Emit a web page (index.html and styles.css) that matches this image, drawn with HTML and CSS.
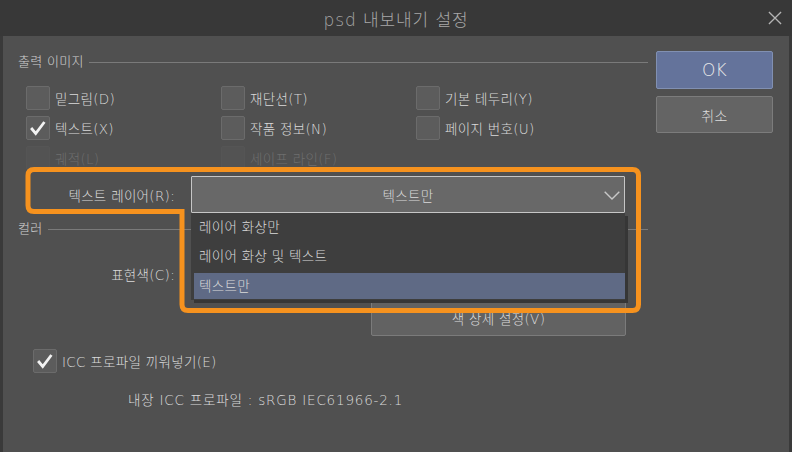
FILE: index.html
```html
<!DOCTYPE html>
<html lang="ko">
<head>
<meta charset="utf-8">
<title>psd 내보내기 설정</title>
<link rel="stylesheet" href="styles.css">
</head>
<body>
<div class="window">
  <header class="titlebar">
    <span class="title">psd 내보내기 설정</span>
    <svg class="close" viewBox="0 0 15 15"><path d="M1 1 L14 14 M14 1 L1 14"/></svg>
  </header>
  <div class="content">
    <div class="main">
      <div class="section-head"><span>출력 이미지</span><i class="rule"></i></div>
      <div class="checks">
        <label class="check"><span class="box"></span>밑그림(D)</label>
        <label class="check"><span class="box"></span>재단선(T)</label>
        <label class="check"><span class="box"></span>기본 테두리(Y)</label>
        <label class="check"><span class="box"><svg class="tick" viewBox="0 0 24 24"><polyline points="4.5,12 9.5,18 19,5.5"/></svg></span>텍스트(X)</label>
        <label class="check"><span class="box"></span>작품 정보(N)</label>
        <label class="check"><span class="box"></span>페이지 번호(U)</label>
        <label class="check disabled"><span class="box"></span>궤적(L)</label>
        <label class="check disabled"><span class="box"></span>세이프 라인(F)</label>
      </div>
      <div class="field">
        <span class="field-label">텍스트 레이어(R):</span>
        <div class="combo">
          <span>텍스트만</span>
          <svg class="chevron" viewBox="0 0 16 9"><polyline points="0.7,0.7 8,8 15.3,0.7"/></svg>
          <ul class="dropdown">
            <li class="item">레이어 화상만</li>
            <li class="item">레이어 화상 및 텍스트</li>
            <li class="item selected">텍스트만</li>
          </ul>
        </div>
      </div>
      <div class="section-head color-head"><span>컬러</span><i class="rule"></i></div>
      <div class="field field-color">
        <span class="field-label">표현색(C):</span>
        <div class="combo under"><span>RGB</span></div>
      </div>
      <button class="btn detail">색 상세 설정(V)</button>
      <label class="check icc"><span class="box"><svg class="tick" viewBox="0 0 24 24"><polyline points="4.5,12 9.5,18 19,5.5"/></svg></span>ICC 프로파일 끼워넣기(E)</label>
      <p class="embedded">내장 ICC 프로파일 : sRGB IEC61966-2.1</p>
    </div>
    <div class="side">
      <button class="btn ok">OK</button>
      <button class="btn cancel">취소</button>
    </div>
  </div>
  <svg class="highlight" viewBox="0 0 792 452"><path d="M34 169.5 H632.5 Q638.5 169.5 638.5 175.5 V304.5 Q638.5 310.5 632.5 310.5 H188 Q182 310.5 182 304.5 V211.5 H34 Q28 211.5 28 205.5 V175.5 Q28 169.5 34 169.5 Z"/></svg>
</div>
</body>
</html>
```

FILE: styles.css
```css
* { box-sizing: border-box; margin: 0; padding: 0; }

body {
  margin: 0;
  background: #3a3a3a;
  font-family: "DejaVu Sans", "Noto Sans CJK KR", sans-serif;
  font-size: 13.5px;
  font-weight: 300;
  letter-spacing: 0.3px;
  color: #dadada;
}

.window {
  position: relative;
  width: 792px;
  height: 452px;
  background: #3a3a3a;
  overflow: hidden;
}

.titlebar {
  position: relative;
  height: 36px;
  display: flex;
  align-items: center;
  justify-content: center;
  background: #383838;
}

.title {
  font-size: 17px;
  color: #a8a8a8;
  letter-spacing: 0.9px;
}

.close {
  position: absolute;
  right: 10px;
  top: 11px;
  width: 14px;
  height: 14px;
  fill: none;
  stroke: #b4b4b4;
  stroke-width: 1.4;
}

.content {
  margin: 0 3px;
  height: 416px;
  background: #505050;
  display: flex;
  gap: 8px;
  padding: 15px 16px 0 15px;
}

.main {
  width: 630px;
  display: flex;
  flex-direction: column;
  align-items: flex-start;
}

.section-head {
  display: flex;
  align-items: center;
  width: 100%;
  height: 16px;
  margin-top: 3px;
  line-height: 16px;
  font-size: 13px;
  color: #d0d0d0;
}

.rule {
  flex: 1;
  height: 1px;
  background: #7a7a7a;
  margin-left: 5px;
}

.checks {
  display: grid;
  grid-template-columns: repeat(3, 195px);
  row-gap: 6px;
  margin: 16px 0 0 8px;
}

.check {
  display: flex;
  align-items: center;
  gap: 5px;
  height: 24px;
  white-space: nowrap;
}

.box {
  flex: none;
  width: 24px;
  height: 24px;
  border: 1px solid #6b6b6b;
  background: #5c5c5c;
  border-radius: 2px;
  display: flex;
}

.tick {
  width: 22px;
  height: 22px;
  fill: none;
  stroke: #f2f2f2;
  stroke-width: 3;
}

.check.disabled { color: #6e6e6e; }
.check.disabled .box { background: #535353; border-color: #555555; }

.field {
  display: flex;
  align-items: center;
  margin-top: 6px;
}

.field-label {
  width: 157px;
  text-align: right;
  margin-right: 16px;
  white-space: nowrap;
}

.combo {
  position: relative;
  width: 434px;
  height: 37px;
  background: #686868;
  border: 1px solid #c6c6c6;
  border-radius: 1px;
  display: flex;
  align-items: center;
  justify-content: center;
}

.chevron {
  position: absolute;
  right: 4px;
  top: 14px;
  width: 16px;
  height: 9px;
  fill: none;
  stroke: #c8c8c8;
  stroke-width: 1.4;
}

.dropdown {
  position: absolute;
  z-index: 2;
  top: calc(100% + 1px);
  left: -1px;
  width: 434px;
  list-style: none;
  background: #3e3e3e;
  padding: 0 0 1px 3px;
  box-shadow: 3px 3px 0 #363636;
}

.item {
  height: 29px;
  line-height: 29px;
  padding-left: 5px;
  color: #dadada;
}

.item.selected {
  height: 26px;
  line-height: 26px;
  margin-top: 2px;
  background: #5f6a85;
}

.color-head { margin-top: 8px; }

.field-color { margin-top: 18px; }

.combo.under { border-color: #7a7a7a; }

.btn {
  font-family: inherit;
  font-weight: 300;
  letter-spacing: inherit;
  color: #dcdcdc;
  border-radius: 2px;
  cursor: default;
}

.detail {
  margin: 7px 0 0 353px;
  width: 255px;
  height: 37px;
  background: #626262;
  border: 1px solid #7b7b7b;
  font-size: 13.5px;
}

.icc { margin: 13px 0 0 15px; }

.embedded {
  margin: 18px 0 0 110px;
  line-height: 18px;
  letter-spacing: 0.8px;
}

.side {
  width: 117px;
  display: flex;
  flex-direction: column;
  gap: 7px;
}

.ok {
  height: 38px;
  background: #64739b;
  border: 1px solid #8190b2;
  font-size: 17px;
  color: #e8e8e8;
}

.cancel {
  height: 37px;
  background: #646464;
  border: 1px solid #7c7c7c;
  font-size: 14px;
}

.highlight {
  position: absolute;
  left: 0;
  top: 0;
  width: 792px;
  height: 452px;
  z-index: 3;
  pointer-events: none;
  fill: none;
  stroke: #f6921e;
  stroke-width: 5;
}
```
